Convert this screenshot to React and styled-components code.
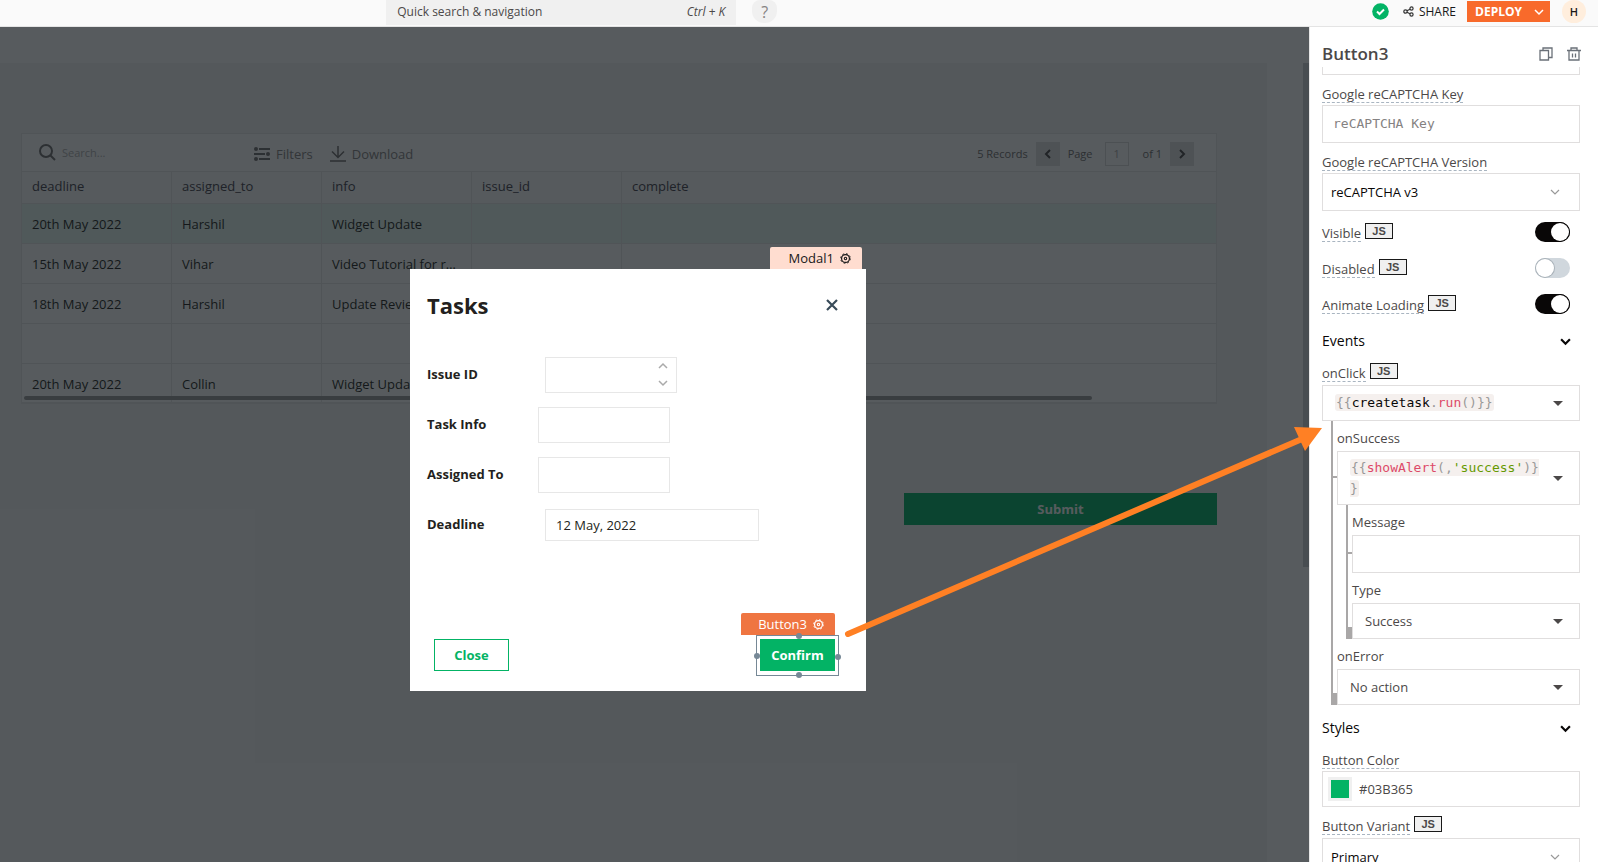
import React from "react";
import styled, { createGlobalStyle, css } from "styled-components";

const sans = `"Open Sans", "Noto Sans", sans-serif`;
const mono = `"DejaVu Sans Mono", "Liberation Mono", monospace`;

const Global = createGlobalStyle`
  *, *::before, *::after { box-sizing: border-box; }
  html, body, #root { height: 100%; margin: 0; }
  body { font-family: ${sans}; font-size: 13px; line-height: 18px; color: #4b4848; background: #fff; overflow: hidden; }
  button, input, select { font: inherit; color: inherit; margin: 0; }
  button { cursor: pointer; }
`;

const Page = styled.div`
  position: relative;
  display: grid;
  grid-template: 27px minmax(0, 1fr) / minmax(0, 1fr);
  height: 100vh;
`;

/* ---------- top bar ---------- */
const TopBar = styled.header`
  display: grid;
  grid-template-columns: 8fr auto 17fr;
  align-items: start;
  background: #fafafa;
  border-bottom: 1px solid #e4e4e4;
  overflow: hidden;
`;
const SearchGroup = styled.div`
  grid-column: 2;
  display: flex;
  gap: 16px;
`;
const QuickSearch = styled.button`
  display: flex;
  justify-content: space-between;
  align-items: center;
  width: 350px;
  height: 25px;
  padding: 0 11px 1px;
  border: 0;
  background: #f0f0f0;
  font-size: 12px;
`;
const HelpButton = styled.button`
  width: 25px;
  height: 23px;
  padding: 0;
  border: 0;
  border-radius: 8px 8px 12px 12px;
  background: #f0f0f0;
  color: #858282;
  font-size: 16px;
  line-height: 22px;
`;
const TopActions = styled.div`
  display: flex;
  justify-content: flex-end;
  align-items: center;
  height: 23px;
  padding-right: 12px;
`;
const ShareButton = styled.button`
  display: flex;
  align-items: center;
  gap: 5px;
  margin: 0 11px 0 14px;
  padding: 0;
  border: 0;
  background: none;
  font-size: 12px;
  font-weight: 500;
  color: #191919;
`;
const DeployButton = styled.button`
  display: flex;
  align-items: center;
  gap: 12px;
  height: 21px;
  padding: 0 6px 0 8px;
  border: 0;
  background: #f86a2b;
  color: #fff;
  font-size: 12px;
  font-weight: 700;
`;
const Avatar = styled.span`
  width: 24px;
  height: 23px;
  margin-left: 12px;
  border-radius: 12px;
  background: #ffeedd;
  color: #191919;
  font-size: 11px;
  font-weight: 600;
  line-height: 23px;
  text-align: center;
`;

/* ---------- editor ---------- */
const Editor = styled.div`
  display: grid;
  grid-template-columns: minmax(0, 1fr) 289px;
`;
const Stage = styled.main`
  position: relative;
  min-width: 0;
  padding: 36px 42px 0 0;
  background: #fff;
  overflow: hidden;
`;
const Artboard = styled.div`
  height: 100%;
  padding: 70px 50px 0 21px;
  background: #f6f6f6;
`;
const TableCard = styled.section`
  position: relative;
  height: 271px;
  background: #fff;
  border: 1px solid #e7e7e7;
  border-bottom-width: 2px;
  overflow: hidden;
`;
const TableToolbar = styled.div`
  display: flex;
  align-items: center;
  height: 38px;
  padding: 0 22px 0 17px;
  border-bottom: 1px solid #e7e7e7;
  color: #858282;
`;
const SearchField = styled.label`
  display: flex;
  align-items: center;
  gap: 6px;
  width: 215px;
  input {
    width: 150px;
    padding: 0;
    border: 0;
    outline: 0;
    background: none;
    font-size: 11px;
    &::placeholder { color: #b0b0b0; opacity: 1; }
  }
`;
const ToolButton = styled.button`
  display: flex;
  align-items: center;
  gap: 6px;
  margin-right: 17px;
  padding: 2px 0 0;
  border: 0;
  background: none;
  font-size: 13px;
`;
const Pager = styled.div`
  display: flex;
  align-items: center;
  gap: 8px;
  margin-left: auto;
  padding-top: 2px;
  font-size: 11px;
  color: #716e6e;
`;
const PageStep = styled.button`
  display: grid;
  place-items: center;
  width: 24px;
  height: 24px;
  padding: 0;
  border: 1px solid #e0e0e0;
  background: #e0e0e0;
  color: #4b4848;
`;
const PageInput = styled.input`
  width: 24px;
  height: 24px;
  margin: 0 6px 0 4px !important;
  padding: 0;
  border: 1px solid #dadada;
  background: #fff;
  text-align: center;
  color: #a9a7a7 !important;
`;
const DataTable = styled.table`
  width: 100%;
  border-collapse: separate;
  border-spacing: 0;
  table-layout: fixed;
  font-size: 13px;
  color: #231f20;
  th, td {
    height: 40px;
    padding: 0 10px;
    border-bottom: 1px solid #e7e7e7;
    text-align: left;
    font-weight: 400;
    white-space: nowrap;
    overflow: hidden;
    text-overflow: ellipsis;
  }
  th:not(:last-child), td:not(:last-child) { border-right: 1px solid #e7e7e7; }
  th { height: 32px; padding: 0 10px 4px; background: #fafafc; color: #43414a; }
`;
const Row = styled.tr`
  background: ${(p) => (p.$selected ? "#e6f7f0" : "#fff")};
`;
const TableScroll = styled.div`
  position: absolute;
  left: 2px;
  bottom: 2px;
  width: calc(100% - 126px);
  height: 4px;
  border-radius: 2px;
  background: #9a9a9a;
`;
const SubmitButton = styled.button`
  display: block;
  width: 313px;
  height: 32px;
  margin: 89px 0 0 auto;
  border: 0;
  background: #03b365;
  color: #fff;
  font-weight: 700;
`;
const StageScroll = styled.div`
  position: absolute;
  top: 36px;
  right: 0;
  width: 6px;
  height: 504px;
  background: #cbcfd3;
`;
const Backdrop = styled.div`
  position: absolute;
  inset: 0;
  display: flex;
  justify-content: center;
  align-items: flex-start;
  padding: 242px 33px 0 0;
  background: rgba(16, 22, 26, 0.7);
`;

/* ---------- modal ---------- */
const Modal = styled.section`
  position: relative;
  display: flex;
  flex-direction: column;
  width: 456px;
  height: 422px;
  padding: 21px 27px 20px 17px;
  background: #fff;
  color: #231f20;
`;
const WidgetTag = styled.span`
  position: absolute;
  bottom: ${(p) => (p.$active ? "calc(100% + 4px)" : "100%")};
  right: ${(p) => p.$right}px;
  display: flex;
  align-items: center;
  justify-content: flex-end;
  gap: 6px;
  width: ${(p) => p.$width}px;
  height: 22px;
  padding-right: 11px;
  border-radius: 2px 2px 0 0;
  background: ${(p) => (p.$active ? "#ef7541" : "#ffddd0")};
  color: ${(p) => (p.$active ? "#fff" : "#191919")};
  font-size: 13px;
`;
const ModalHead = styled.div`
  display: flex;
  justify-content: space-between;
  align-items: center;
  height: 30px;
  margin-bottom: 37px;
  h2 { margin: 0; font-size: 22px; line-height: 30px; font-weight: 700; }
`;
const IconButton = styled.button`
  display: grid;
  place-items: center;
  padding: 0;
  border: 0;
  background: none;
  color: ${(p) => p.$color || "#182026"};
`;
const FormRow = styled.div`
  display: flex;
  align-items: center;
  height: 36px;
  margin-bottom: 14px;
  label { width: ${(p) => (p.$wide ? 118 : 111)}px; padding-bottom: 2px; font-weight: 700; }
`;
const TextBox = styled.input`
  width: ${(p) => p.$width || 132}px;
  height: ${(p) => p.$height || 36}px;
  padding: 0 10px;
  border: 1px solid #e7e7e7;
  border-radius: 0;
  outline: 0;
  background: #fff;
`;
const NumberBox = styled.div`
  position: relative;
  display: flex;
`;
const Steppers = styled.div`
  position: absolute;
  top: 4px;
  right: 9px;
  display: grid;
  gap: 7px;
  color: #aaa;
`;
const ModalFoot = styled.div`
  display: flex;
  justify-content: space-between;
  margin: auto 4px 0 7px;
`;
const ModalButton = styled.button`
  width: 75px;
  height: 32px;
  padding: 0;
  border: 1px solid #03b365;
  background: ${(p) => (p.$filled ? "#03b365" : "#fff")};
  color: ${(p) => (p.$filled ? "#fff" : "#03b365")};
  font-weight: 700;
`;
const Selected = styled.div`
  position: relative;
`;
const SelectionFrame = styled.div`
  position: absolute;
  inset: -4px -4px -5px;
  border: 1px solid #768896;
  pointer-events: none;
`;
const Handle = styled.i`
  position: absolute;
  width: 6px;
  height: 6px;
  border-radius: 3px;
  background: #768896;
  ${(p) => ({
    top: css`top: -3px; left: calc(50% - 2px);`,
    bottom: css`bottom: -3px; left: calc(50% - 2px);`,
    left: css`left: -3px; top: calc(50% - 3px);`,
    right: css`right: -3px; top: calc(50% - 2px);`,
  }[p.$side])}
`;

/* ---------- property pane ---------- */
const Pane = styled.aside`
  padding: 0 18px 0 12px;
  border-left: 1px solid #e7e7e7;
  background: #fff;
  overflow: hidden;
`;
const PaneHead = styled.div`
  display: flex;
  align-items: center;
  gap: 14px;
  height: 40px;
  padding-top: 13px;
  margin-right: -1px;
  h1 { flex: 1; margin: 0; font-size: 17px; line-height: 24px; font-weight: 600; color: #4b4848; }
`;
const ClippedField = styled.div`
  height: 8px;
  border: 1px solid #e0dede;
  border-top: 0;
`;
const Group = styled.div`
  margin-top: ${(p) => p.$top ?? 10}px;
`;
const LabelRow = styled.div`
  display: flex;
  align-items: flex-start;
  gap: 4px;
  height: 20px;
  ${(p) => p.$nested && css`height: 30px; padding-top: 8px;`}
`;
const BadgeRow = styled.div`
  display: flex;
  align-items: flex-end;
  gap: 4px;
  height: 20px;
  margin-bottom: ${(p) => p.$bottom || 0}px;
`;
const Label = styled.label`
  height: 18px;
  line-height: 18px;
  color: #4b4848;
  ${(p) => p.$hint && css`border-bottom: 1px dashed #a9b5c1;`}
`;
const JsBadge = styled.button`
  width: 28px;
  height: 16px;
  margin-bottom: 3px !important;
  padding: 0;
  border: 1px solid #191919;
  background: #f0f0f0;
  font: 700 11px/14px "Liberation Sans", sans-serif;
  color: #4b4848;
`;
const PaneInput = styled.input`
  display: block;
  width: 100%;
  height: 38px;
  padding: 0 10px 2px;
  border: 1px solid #e0dede;
  outline: 0;
  font-family: ${mono};
  font-size: 13px;
  &::placeholder { color: #858282; opacity: 1; }
`;
const SelectWrap = styled.div`
  position: relative;
  display: flex;
  select {
    width: 100%;
    height: ${(p) => (p.$dark ? 38 : 36)}px;
    padding: 0 ${(p) => (p.$dark ? 8 : 12)}px;
    border: 1px solid #e0dede;
    border-radius: 0;
    outline: 0;
    background: #fff;
    appearance: none;
    color: ${(p) => (p.$dark ? "#090707" : "#4b4848")};
  }
  svg { position: absolute; right: ${(p) => (p.$dark ? 20 : 17)}px; top: calc(50% - 5px); pointer-events: none; }
`;
const CodeBox = styled.div`
  display: flex;
  align-items: center;
  justify-content: space-between;
  min-height: 36px;
  padding: ${(p) => (p.$multi ? "5px 16px 5px 12px" : "0 16px 0 12px")};
  border: 1px solid #e0dede;
  background: #fff;
  font-family: ${mono};
  font-size: 13px;
  line-height: ${(p) => (p.$multi ? 21 : 18)}px;
  color: #999;
  code {
    width: 192px;
    font: inherit;
    line-break: anywhere;
  }
  mark { background: #f5f0ee; color: inherit; border-radius: 3px; padding: 1px; }
  b { font-weight: 400; color: #090707; }
  i { font-style: normal; color: #dd4a68; }
  s { text-decoration: none; color: #690; }
`;
const ToggleRow = styled.div`
  display: flex;
  align-items: center;
  justify-content: space-between;
  height: 20px;
  margin-bottom: 16px;
  padding-right: 10px;
`;
const Toggle = styled.input`
  appearance: none;
  width: 35px;
  height: 20px;
  border-radius: 10px;
  background: ${(p) => (p.defaultChecked ? "#090707" : "#d0d7dd")};
  &::before {
    content: "";
    display: block;
    width: 18px;
    height: 18px;
    margin: 1px 1px 1px ${(p) => (p.defaultChecked ? 16 : 1)}px;
    border-radius: 9px;
    background: #fff;
    box-shadow: 0 0 0 1px ${(p) => (p.defaultChecked ? "#090707" : "#a9b2b9")};
  }
`;
const SectionTitle = styled.button`
  display: flex;
  align-items: center;
  justify-content: space-between;
  width: 100%;
  height: 22px;
  padding: 0 9px 0 0;
  border: 0;
  background: none;
  font-size: 14px;
  color: #090707;
`;
const Branch = styled.div`
  position: relative;
  margin-left: 9px;
  padding-left: 4px;
  border-left: 2px solid #a9a7a7;
  &::after {
    content: "";
    position: absolute;
    left: -2px;
    bottom: 0;
    width: 6px;
    height: 12px;
    background: #a9a7a7;
  }
`;
const Tick = styled.div`
  position: relative;
  &::before {
    content: "";
    position: absolute;
    left: -4px;
    top: calc(50% - 2px);
    width: 4px;
    height: 2px;
    background: #a9a7a7;
  }
`;
const ColorField = styled.div`
  display: flex;
  align-items: center;
  gap: 7px;
  height: 36px;
  padding: 0 5px;
  border: 1px solid #e0dede;
  input { flex: 1; min-width: 0; padding: 0; border: 0; outline: 0; background: none; }
`;
const Swatch = styled.span`
  width: 24px;
  height: 24px;
  border: 3px solid #f0f0f0;
  background: #03b365;
`;
const Annotation = styled.svg`
  position: absolute;
  left: calc(100% - 758px);
  top: 415px;
  width: 490px;
  height: 230px;
  pointer-events: none;
`;

/* ---------- icons ---------- */
const Chevron = ({ dir = "down", w = 10, stroke = 2, color = "currentColor" }) => {
  const d = { down: "M1 3l4 4 4-4", up: "M1 7l4-4 4 4", left: "M7 1L3 5l4 4", right: "M3 1l4 4-4 4" }[dir];
  return (
    <svg width={w} height={w} viewBox="0 0 10 10" fill="none" stroke={color} strokeWidth={stroke} aria-hidden="true">
      <path d={d} />
    </svg>
  );
};
const Caret = () => (
  <svg width="10" height="10" viewBox="0 0 10 10" fill="#4b4848" aria-hidden="true"><path d="M0 3h10L5 8z" /></svg>
);
const Gear = () => (
  <svg width="11" height="11" viewBox="0 0 12 12" fill="none" stroke="currentColor" aria-hidden="true">
    <circle cx="6" cy="6" r="4.3" strokeWidth="1.3" />
    <circle cx="6" cy="6" r="1.3" strokeWidth="1.2" />
    <circle cx="6" cy="6" r="5.3" strokeWidth="1" strokeDasharray="2 2.16" />
  </svg>
);

const columns = ["deadline", "assigned_to", "info", "issue_id", "complete"];
const rows = [
  ["20th May 2022", "Harshil", "Widget Update"],
  ["15th May 2022", "Vihar", "Video Tutorial for release"],
  ["18th May 2022", "Harshil", "Update Review"],
  ["", "", ""],
  ["20th May 2022", "Collin", "Widget Update"],
];
const toggles = [["Visible", true], ["Disabled", false], ["Animate Loading", true]];

function Header() {
  return (
    <TopBar>
      <SearchGroup>
        <QuickSearch><span>Quick search &amp; navigation</span><em>Ctrl + K</em></QuickSearch>
        <HelpButton aria-label="Help">?</HelpButton>
      </SearchGroup>
      <TopActions>
        <svg width="17" height="17" viewBox="0 0 17 17" aria-hidden="true">
          <circle cx="8.500" cy="8.500" r="8.300" fill="#03b365" />
          <path d="M5 8.500l2.500 2.500L12 6.500" fill="none" stroke="#fff" strokeWidth="2" />
        </svg>
        <ShareButton>
          <svg width="11" height="11" viewBox="0 0 11 11" fill="none" stroke="#333" strokeWidth="1.2" aria-hidden="true">
            <circle cx="2.500" cy="5.500" r="1.700" /><circle cx="8.500" cy="2.500" r="1.600" /><circle cx="8.500" cy="8.500" r="1.600" />
            <path d="M4 4.700l3-1.500M4 6.300l3 1.500" />
          </svg>
          SHARE
        </ShareButton>
        <DeployButton>DEPLOY <Chevron stroke={1.5} /></DeployButton>
        <Avatar>H</Avatar>
      </TopActions>
    </TopBar>
  );
}

function TasksTable() {
  return (
    <TableCard>
      <TableToolbar>
        <SearchField>
          <svg width="17" height="17" viewBox="0 0 17 17" fill="none" stroke="#716e6e" strokeWidth="2" aria-hidden="true">
            <circle cx="7" cy="7" r="6" /><path d="M11.500 11.500l4.500 4.500" />
          </svg>
          <input placeholder="Search..." aria-label="Search" />
        </SearchField>
        <ToolButton>
          <svg width="16" height="14" viewBox="0 0 16 14" fill="#716e6e" aria-hidden="true">
            <path d="M5 1h11v2H5zM0 6h11v2H0zM5 11h11v2H5z" /><circle cx="2" cy="2" r="2" /><circle cx="14" cy="7" r="2" /><circle cx="2" cy="12" r="2" />
          </svg>
          Filters
        </ToolButton>
        <ToolButton>
          <svg width="16" height="16" viewBox="0 0 16 16" fill="none" stroke="#716e6e" strokeWidth="1.5" aria-hidden="true">
            <path d="M8 0v11M2 5.500l6 6 6-6M0 15h16" />
          </svg>
          Download
        </ToolButton>
        <Pager>
          <span>5 Records</span>
          <PageStep aria-label="Previous page"><Chevron dir="left" /></PageStep>
          <label htmlFor="page">Page</label>
          <PageInput id="page" defaultValue="1" />
          <span>of 1</span>
          <PageStep aria-label="Next page"><Chevron dir="right" /></PageStep>
        </Pager>
      </TableToolbar>
      <DataTable>
        <colgroup><col width="150" /><col width="150" /><col width="150" /><col width="150" /><col /></colgroup>
        <thead><tr>{columns.map((c) => <th key={c}>{c}</th>)}</tr></thead>
        <tbody>
          {rows.map((r, i) => (
            <Row key={i} $selected={i === 0}>{columns.map((c, j) => <td key={c}>{r[j]}</td>)}</Row>
          ))}
        </tbody>
      </DataTable>
      <TableScroll />
    </TableCard>
  );
}

function TasksModal() {
  return (
    <Modal role="dialog" aria-labelledby="modal-title">
      <WidgetTag $width={92} $right={4}>Modal1 <Gear /></WidgetTag>
      <ModalHead>
        <h2 id="modal-title">Tasks</h2>
        <IconButton aria-label="Close dialog">
          <svg width="14" height="14" viewBox="0 0 14 14" stroke="#394b59" strokeWidth="2.200" aria-hidden="true"><path d="M2 2l10 10M12 2L2 12" /></svg>
        </IconButton>
      </ModalHead>
      <FormRow $wide>
        <label htmlFor="issue">Issue ID</label>
        <NumberBox>
          <TextBox id="issue" />
          <Steppers><Chevron dir="up" stroke={1.5} /><Chevron stroke={1.5} /></Steppers>
        </NumberBox>
      </FormRow>
      <FormRow><label htmlFor="info">Task Info</label><TextBox id="info" /></FormRow>
      <FormRow><label htmlFor="assigned">Assigned To</label><TextBox id="assigned" /></FormRow>
      <FormRow $wide><label htmlFor="due">Deadline</label><TextBox id="due" $width={214} $height={32} defaultValue="12 May, 2022" /></FormRow>
      <ModalFoot>
        <ModalButton>Close</ModalButton>
        <Selected>
          <ModalButton $filled>Confirm</ModalButton>
          <WidgetTag $active $width={94} $right={0}>Button3 <Gear /></WidgetTag>
          <SelectionFrame>
            {["top", "bottom", "left", "right"].map((s) => <Handle key={s} $side={s} />)}
          </SelectionFrame>
        </Selected>
      </ModalFoot>
    </Modal>
  );
}

function PropertyPane() {
  return (
    <Pane>
      <PaneHead>
        <h1>Button3</h1>
        <IconButton aria-label="Copy" $color="#6a7078">
          <svg width="14" height="14" viewBox="0 0 14 14" fill="none" stroke="currentColor" strokeWidth="1.300" aria-hidden="true"><path d="M1 3.500h8.500V13H1zM4 3.500V1h9v9.500H9.500" /></svg>
        </IconButton>
        <IconButton aria-label="Delete" $color="#6a7078">
          <svg width="14" height="14" viewBox="0 0 14 14" fill="none" stroke="currentColor" strokeWidth="1.300" aria-hidden="true"><path d="M0 3.500h14M4 3.500V1h6v2.500M2 3.500V13h10V3.500M5.500 6.500v4M8.500 6.500v4" /></svg>
        </IconButton>
      </PaneHead>
      <ClippedField />
      <Group>
        <LabelRow><Label $hint htmlFor="key">Google reCAPTCHA Key</Label></LabelRow>
        <PaneInput id="key" placeholder="reCAPTCHA Key" />
      </Group>
      <Group>
        <LabelRow><Label $hint htmlFor="version">Google reCAPTCHA Version</Label></LabelRow>
        <SelectWrap $dark>
          <select id="version"><option>reCAPTCHA v3</option></select>
          <Chevron stroke={1.2} color="#999" />
        </SelectWrap>
      </Group>
      <Group $top={11}>
        {toggles.map(([name, on]) => (
          <ToggleRow key={name}>
            <BadgeRow><Label $hint htmlFor={name}>{name}</Label><JsBadge>JS</JsBadge></BadgeRow>
            <Toggle id={name} type="checkbox" defaultChecked={on} />
          </ToggleRow>
        ))}
      </Group>
      <SectionTitle>Events <Chevron w={11} /></SectionTitle>
      <Group>
        <BadgeRow $bottom={3}><Label as="span" $hint>onClick</Label><JsBadge>JS</JsBadge></BadgeRow>
        <CodeBox><code><mark>{"{{"}<b>createtask</b>.<i>run</i>{"()}}"}</mark></code><Caret /></CodeBox>
      </Group>
      <Branch>
        <LabelRow $nested><Label as="span">onSuccess</Label></LabelRow>
        <Tick><CodeBox $multi><code><mark>{"{{"}<i>showAlert</i>(,<s>'success'</s>{")}}"}</mark></code><Caret /></CodeBox></Tick>
        <Branch>
          <LabelRow $nested><Label htmlFor="message">Message</Label></LabelRow>
          <Tick><PaneInput id="message" /></Tick>
          <LabelRow $nested><Label htmlFor="type">Type</Label></LabelRow>
          <SelectWrap><select id="type"><option>Success</option></select><Caret /></SelectWrap>
        </Branch>
        <LabelRow $nested><Label htmlFor="onerror">onError</Label></LabelRow>
        <SelectWrap><select id="onerror"><option>No action</option></select><Caret /></SelectWrap>
      </Branch>
      <Group $top={12}><SectionTitle>Styles <Chevron w={11} /></SectionTitle></Group>
      <Group $top={12}>
        <LabelRow><Label $hint htmlFor="color">Button Color</Label></LabelRow>
        <ColorField><Swatch /><input id="color" defaultValue="#03B365" /></ColorField>
      </Group>
      <Group $top={8}>
        <BadgeRow $bottom={3}><Label $hint htmlFor="variant">Button Variant</Label><JsBadge>JS</JsBadge></BadgeRow>
        <SelectWrap $dark>
          <select id="variant"><option>Primary</option></select>
          <Chevron stroke={1.2} color="#999" />
        </SelectWrap>
      </Group>
    </Pane>
  );
}

export default function App() {
  return (
    <Page>
      <Global />
      <Header />
      <Editor>
        <Stage>
          <Artboard>
            <TasksTable />
            <SubmitButton>Submit</SubmitButton>
          </Artboard>
          <StageScroll />
          <Backdrop><TasksModal /></Backdrop>
        </Stage>
        <PropertyPane />
      </Editor>
      <Annotation viewBox="0 0 490 230" aria-hidden="true">
        <path d="M8 219L462 24" fill="none" stroke="#ff8024" strokeWidth="6" strokeLinecap="round" />
        <path d="M482 13L454 12 465 36z" fill="#ff8024" />
      </Annotation>
    </Page>
  );
}
